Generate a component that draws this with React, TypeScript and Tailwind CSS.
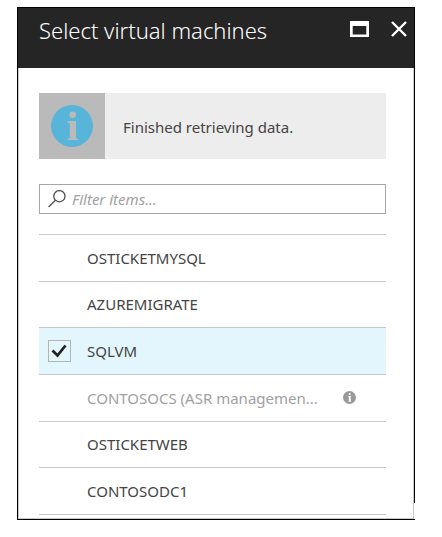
import { useState } from "react";

type Machine = { name: string; disabled?: boolean };

const machines: Machine[] = [
  { name: "OSTICKETMYSQL" },
  { name: "AZUREMIGRATE" },
  { name: "SQLVM" },
  { name: "CONTOSOCS (ASR managemen...", disabled: true },
  { name: "OSTICKETWEB" },
  { name: "CONTOSODC1" },
];

function InfoGlyph({ className }: { className: string }) {
  return (
    <svg viewBox="0 0 42 42" className={className} aria-hidden="true">
      <circle cx="21" cy="21" r="21" fill="currentColor" />
      <circle cx="21.7" cy="9.8" r="3.3" className="fill-(--glyph)" />
      <path d="M16.6 16h8.4v17.2l2 .6V35H16.6v-1.2l2.2-.6V18.4l-2.2-.8z" className="fill-(--glyph)" />
    </svg>
  );
}

function Row({ machine, checked, onToggle }: { machine: Machine; checked: boolean; onToggle: () => void }) {
  const id = "vm-" + machine.name.split(" ")[0];
  return (
    <li className={`group flex items-center border-b border-[#c8c8c8] pl-[9px] ${checked ? "bg-[#e3f6fd]" : "bg-white"}`}>
      <span className="relative mr-4 h-[22px] w-[23px] shrink-0">
        <input
          id={id}
          type="checkbox"
          checked={checked}
          disabled={machine.disabled}
          onChange={onToggle}
          className="peer block h-full w-full appearance-none border border-[#b4b4b4] bg-transparent opacity-0 checked:opacity-100 enabled:group-hover:opacity-100"
        />
        <svg
          viewBox="0 0 23 22"
          className="pointer-events-none absolute inset-0 hidden h-full w-full peer-checked:block"
          fill="none"
          stroke="#222"
          strokeWidth="2.8"
          aria-hidden="true"
        >
          <path d="M4.5 10.5l5 5L17.5 5.5" />
        </svg>
      </span>
      <label
        htmlFor={id}
        className={`min-w-[232px] text-[15px] leading-5 whitespace-nowrap ${machine.disabled ? "text-[#a0a0a0]" : "text-[#444]"}`}
      >
        {machine.name}
      </label>
      {machine.disabled && (
        <span className="ml-6 text-[#999] [--glyph:#fff]">
          <InfoGlyph className="h-[13px] w-[13px]" />
        </span>
      )}
    </li>
  );
}

export default function App() {
  const [selected, setSelected] = useState<string[]>(["SQLVM"]);
  const toggle = (name: string) =>
    setSelected((s) => (s.includes(name) ? s.filter((n) => n !== name) : [...s, name]));

  return (
    <main className="bg-white pt-[7px] pr-[27px] pb-[17px] pl-[17px] font-['Noto_Sans','Open_Sans',sans-serif]">
      <section className="relative border-y border-l border-black pr-px after:absolute after:-top-px after:right-0 after:bottom-4 after:w-px after:bg-black">
        <header className="flex h-[60px] items-start bg-[#252525] pt-1.5 pr-[7px] pl-[21px] text-white">
          <h1 className="flex-1 text-[22px] leading-8 font-light text-white">Select virtual machines</h1>
          <button type="button" aria-label="Maximize" className="mt-[7px] mr-[22px]">
            <svg viewBox="0 0 19 16" className="h-4 w-[19px]" aria-hidden="true">
              <path fillRule="evenodd" fill="#fff" d="M0 0h19v16H0zM2.7 5v8.4h13.6V5z" />
            </svg>
          </button>
          <button type="button" aria-label="Close" className="mt-[7px]">
            <svg viewBox="0 0 16 16" className="h-4 w-4" fill="none" stroke="#fff" strokeWidth="2.4" aria-hidden="true">
              <path d="M1 1l14 14M15 1L1 15" />
            </svg>
          </button>
        </header>
        <div className="border-x border-b border-[#c8c8c8] pt-[25px] pr-[27px] pb-[3px] pl-5">
          <div role="status" className="flex h-[66px] items-center bg-[#ededed]">
            <span className="flex h-full w-[66px] items-center justify-center bg-[#bababa] text-[#59b4d9] [--glyph:#bababa]">
              <InfoGlyph className="h-[42px] w-[42px]" />
            </span>
            <p className="pt-0.5 pl-[18px] text-[15px] leading-5 text-[#444]">Finished retrieving data.</p>
          </div>
          <div className="mt-[25px] flex h-[30px] items-center border border-[#a6a6a6] pl-2">
            <svg viewBox="0 0 19 19" className="mr-[5px] h-[19px] w-[19px] shrink-0" fill="none" stroke="#4d4d4d" strokeWidth="1.3" aria-hidden="true">
              <circle cx="11.4" cy="6.2" r="5.6" />
              <path d="M7.4 10.2L.6 17" />
            </svg>
            <input
              type="text"
              aria-label="Filter items"
              placeholder="Filter items..."
              className="w-full min-w-0 flex-1 bg-transparent text-[15px] leading-5 text-[#444] outline-none placeholder:text-[#a0a0a0] placeholder:italic"
            />
          </div>
          <ul className="mt-5 grid min-h-[281px] auto-rows-fr border-t border-[#c8c8c8]">
            {machines.map((m) => (
              <Row key={m.name} machine={m} checked={selected.includes(m.name)} onToggle={() => toggle(m.name)} />
            ))}
          </ul>
        </div>
      </section>
    </main>
  );
}
